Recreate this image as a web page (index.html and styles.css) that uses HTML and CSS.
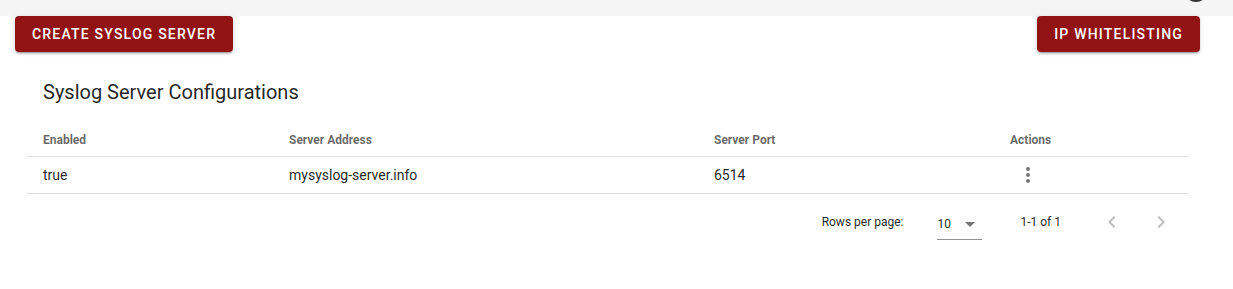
FILE: index.html
```html
<!DOCTYPE html>
<html>
<head>
<meta charset="utf-8">
<link rel="stylesheet" href="styles.css">
</head>
<body>
<div class="topbar"><span class="avatar"></span></div>
<div class="page">
  <div class="actions-row">
    <button class="btn">Create Syslog Server</button>
    <button class="btn">IP Whitelisting</button>
  </div>
  <div class="card">
    <div class="card-title">Syslog Server Configurations</div>
    <div class="table">
      <div class="row head">
        <div class="cell c1">Enabled</div>
        <div class="cell c2">Server Address</div>
        <div class="cell c3">Server Port</div>
        <div class="cell c4">Actions</div>
      </div>
      <div class="row body">
        <div class="cell c1">true</div>
        <div class="cell c2">mysyslog-server.info</div>
        <div class="cell c3">6514</div>
        <div class="cell c4">
          <span class="icon-btn">
            <svg viewBox="0 0 24 24" width="24" height="24"><path fill="rgba(0,0,0,.54)" d="M12,16A2,2 0 0,1 14,18A2,2 0 0,1 12,20A2,2 0 0,1 10,18A2,2 0 0,1 12,16M12,10A2,2 0 0,1 14,12A2,2 0 0,1 12,14A2,2 0 0,1 10,12A2,2 0 0,1 12,10M12,4A2,2 0 0,1 14,6A2,2 0 0,1 12,8A2,2 0 0,1 10,6A2,2 0 0,1 12,4Z"/></svg>
          </span>
        </div>
      </div>
      <div class="footer">
        <span class="rpp">Rows per page:</span>
        <span class="select">
          <span class="sel-val">10</span>
          <svg viewBox="0 0 24 24" width="24" height="24"><path fill="rgba(0,0,0,.54)" d="M7,10L12,15L17,10H7Z"/></svg>
        </span>
        <span class="pages">1-1 of 1</span>
        <span class="nav-btn first">
          <svg viewBox="0 0 24 24" width="24" height="24"><path fill="rgba(0,0,0,.26)" d="M15.41,16.58L10.83,12L15.41,7.41L14,6L8,12L14,18L15.41,16.58Z"/></svg>
        </span>
        <span class="nav-btn">
          <svg viewBox="0 0 24 24" width="24" height="24"><path fill="rgba(0,0,0,.26)" d="M8.59,16.58L13.17,12L8.59,7.41L10,6L16,12L10,18L8.59,16.58Z"/></svg>
        </span>
      </div>
    </div>
  </div>
</div>
</body>
</html>
```

FILE: styles.css
```css
* { box-sizing: border-box; }
html, body {
  margin: 0;
  padding: 0;
  background: #fff;
  font-family: Roboto, "Liberation Sans", sans-serif;
  color: rgba(0,0,0,.87);
  overflow: hidden;
}
.topbar {
  height: 16px;
  background: #f5f5f5;
  display: flex;
  justify-content: flex-end;
  padding-right: 24px;
  overflow: hidden;
}
.avatar {
  width: 26px;
  height: 28px;
  border-radius: 50%;
  background: #333;
  margin-top: -26px;
}
.page {
  padding: 0 33px 0 15px;
}
.actions-row {
  display: flex;
  justify-content: space-between;
  align-items: flex-start;
}
.btn {
  height: 36px;
  padding: 0 17px;
  border: none;
  border-radius: 4px;
  background: #921313;
  color: #fff;
  font-family: Roboto, "Liberation Sans", sans-serif;
  font-size: 14px;
  font-weight: 500;
  letter-spacing: 1.2px;
  text-transform: uppercase;
  box-shadow: 0 3px 1px -2px rgba(0,0,0,.2), 0 2px 2px 0 rgba(0,0,0,.14), 0 1px 5px 0 rgba(0,0,0,.12);
}
.card {
  margin-top: 8px;
  padding: 16px 12px 0 12px;
}
.card-title {
  padding: 0 16px;
  font-size: 20px;
  line-height: 32px;
  height: 46px;
}
.row {
  display: flex;
  border-bottom: 1px solid #e0e0e0;
}
.row.head { height: 35px; }
.row.body { height: 37px; }
.cell {
  padding: 0 16px;
  display: flex;
  align-items: center;
}
.head .cell {
  font-size: 12px;
  font-weight: 700;
  color: rgba(0,0,0,.6);
  padding-top: 1px;
}
.body .cell { font-size: 14px; }
.c1 { width: 246px; }
.c2 { width: 425px; }
.c3 { width: 296px; }
.c4 { flex: 1; }
.icon-btn {
  width: 36px;
  height: 36px;
  display: flex;
  align-items: center;
  justify-content: center;
}
.footer {
  height: 56px;
  display: flex;
  justify-content: flex-end;
  align-items: center;
  padding-right: 9px;
  font-size: 12px;
}
.select {
  width: 45px;
  margin-left: 34px;
  display: flex;
  align-items: center;
  border-bottom: 1px solid rgba(0,0,0,.42);
  height: 33px;
  margin-top: 2px;
  padding-top: 2px;
}
.sel-val { flex: 1; }
.pages { margin-left: 38px; margin-right: 33px; }
.nav-btn {
  width: 36px;
  height: 36px;
  display: flex;
  align-items: center;
  justify-content: center;
}
.nav-btn.first { margin-right: 13px; }
```
